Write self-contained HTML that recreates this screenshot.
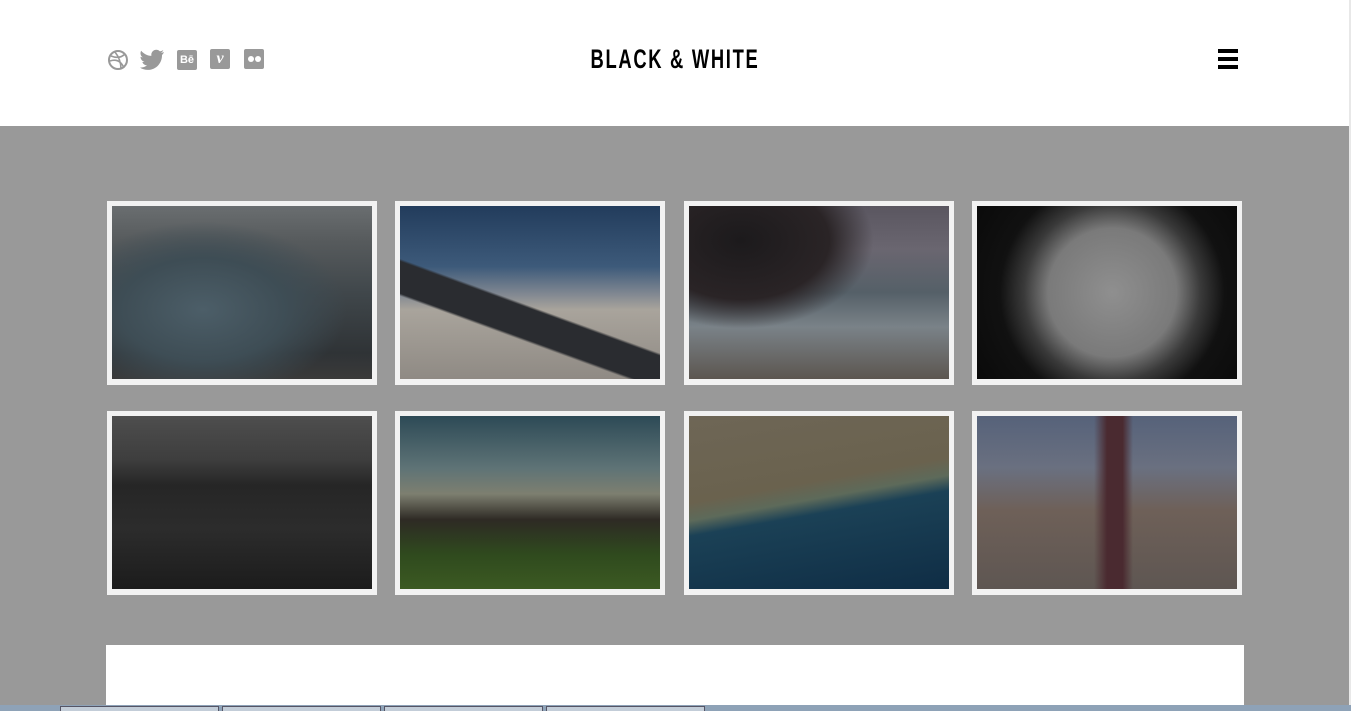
<!DOCTYPE html>
<html><head><meta charset="utf-8"><style>
html,body{margin:0;padding:0;width:1351px;height:711px;overflow:hidden;background:#999;font-family:"Liberation Sans",sans-serif;position:relative}
.hdr{position:absolute;left:0;top:0;width:1349px;height:126px;background:#fff}
.sb{position:absolute;left:1349px;top:0;width:2px;height:705px;background:#e8e8e8}
.title{position:absolute;left:475px;width:400px;top:44px;text-align:center;white-space:nowrap;font-family:"Liberation Sans",sans-serif;font-weight:bold;font-size:27px;line-height:30px;letter-spacing:2.5px;color:#000;transform:scaleX(.68);transform-origin:50% 50%}
.ham{position:absolute;left:1218px;width:20px;height:4px;background:#000}
.ic{position:absolute;top:49px}
.card{position:absolute;width:260px;height:173px;padding:5px 5px 6px 5px;background:#f2f2f2}
.card div{width:260px;height:173px}
.bot{position:absolute;left:106px;top:645px;width:1138px;height:60px;background:#fff}
.task{position:absolute;left:0;top:705px;width:1351px;height:6px;background:#8ea2b7}
.tb{position:absolute;top:706px;height:5px;width:157px;background:#c3cdd8;border:1px solid #556;border-bottom:none}
</style></head><body>
<div class="hdr">
<svg class="ic" style="left:107px" width="22" height="22" viewBox="0 0 22 22"><circle cx="11" cy="11" r="9" fill="none" stroke="#999" stroke-width="2"/><path d="M4 7c5 2 10 2 14-2M3 12c6-2 11 0 14 7M8 3c4 5 6 10 6 17" fill="none" stroke="#999" stroke-width="1.6"/></svg>
<svg class="ic" style="left:140px" width="26" height="22" viewBox="0 0 26 22"><path d="M24 3c-1 .5-2 .7-3 .8 1-.6 2-1.6 2.3-2.7-1 .6-2 1-3.3 1.3C19 1.3 17.7.7 16.3.7c-2.8 0-5 2.3-5 5 0 .4 0 .8.1 1.2C7.3 6.7 3.6 4.7 1.2 1.7c-.4.7-.7 1.6-.7 2.5 0 1.8.9 3.3 2.3 4.2-.8 0-1.6-.3-2.3-.6 0 2.4 1.7 4.5 4 5-.4.1-.9.2-1.3.2-.3 0-.6 0-.9-.1.6 2 2.5 3.5 4.7 3.5-1.7 1.4-3.9 2.2-6.3 2.2H0c2.2 1.4 4.9 2.3 7.7 2.3 9.3 0 14.3-7.7 14.3-14.3v-.6C23 5 23.7 4 24 3z" fill="#999"/></svg>
<div class="ic" style="left:177px;top:50px;width:20px;height:20px;background:#999;border-radius:2px;color:#fff;font-weight:bold;font-size:11px;line-height:20px;text-align:center">Bē</div>
<div class="ic" style="left:210px;top:49px;width:20px;height:20px;background:#999;border-radius:2px;color:#fff;font-weight:bold;font-style:italic;font-size:16px;line-height:20px;text-align:center;font-family:'Liberation Serif',serif">v</div>
<div class="ic" style="left:244px;top:49px;width:20px;height:20px;background:#999;border-radius:2px"><span style="position:absolute;left:4px;top:7px;width:6px;height:6px;border-radius:3px;background:#fff"></span><span style="position:absolute;left:11px;top:7px;width:6px;height:6px;border-radius:3px;background:#fff"></span></div>
<div class="title">BLACK &amp; WHITE</div>
<div class="ham" style="top:49px"></div><div class="ham" style="top:57px"></div><div class="ham" style="top:65px"></div>
</div>
<div class="sb"></div>

<div class="card" style="left:107px;top:201px"><div style="background:radial-gradient(ellipse at 35% 60%,#4c5e68 0,#3e4d55 35%,transparent 60%),linear-gradient(180deg,#6a6e70 0,#575b5d 20%,#40474b 50%,#2f3336 85%,#3a3a3a 100%)"></div></div>
<div class="card" style="left:395px;top:201px"><div style="background:linear-gradient(200deg,transparent 55%,#2a2c30 56%,#2a2c30 68%,transparent 69%),linear-gradient(180deg,#223c5c 0,#3d5a7a 35%,#7d8590 50%,#a9a49c 60%,#8f8a84 100%)"></div></div>
<div class="card" style="left:684px;top:201px"><div style="background:radial-gradient(ellipse at 20% 20%,#1c1a1c 0,#2a2426 30%,transparent 45%),linear-gradient(180deg,#5a5660 0,#6a6670 25%,#556068 50%,#7a8288 70%,#5c5650 100%)"></div></div>
<div class="card" style="left:972px;top:201px"><div style="background:radial-gradient(circle at 52% 50%,#8f8f8f 0,#7a7a7a 40%,#3a3a3a 55%,#111 70%,#0a0a0a 100%)"></div></div>

<div class="card" style="left:107px;top:411px"><div style="background:linear-gradient(180deg,#4e4e4e 0,#3e3e3e 25%,#262626 40%,#2c2c2c 65%,#1c1c1c 100%)"></div></div>
<div class="card" style="left:395px;top:411px"><div style="background:linear-gradient(180deg,#2d4a56 0,#5e7376 30%,#7d7f70 45%,#2e2a24 60%,#2f4a1e 80%,#3c5a22 100%)"></div></div>
<div class="card" style="left:684px;top:411px"><div style="background:linear-gradient(170deg,#6e6656 0,#6a624e 40%,#5d6a5a 48%,#1b4156 55%,#0f2d45 100%)"></div></div>
<div class="card" style="left:972px;top:411px"><div style="background:linear-gradient(90deg,transparent 45%,#4a2a30 50%,#4a2a30 56%,transparent 60%),linear-gradient(180deg,#56627a 0,#6a7080 30%,#6e6058 55%,#5e5652 100%)"></div></div>

<div class="bot"></div>
<div class="task"></div>
<div class="tb" style="left:60px"></div><div class="tb" style="left:222px"></div><div class="tb" style="left:384px"></div><div class="tb" style="left:546px"></div>
</body></html>
